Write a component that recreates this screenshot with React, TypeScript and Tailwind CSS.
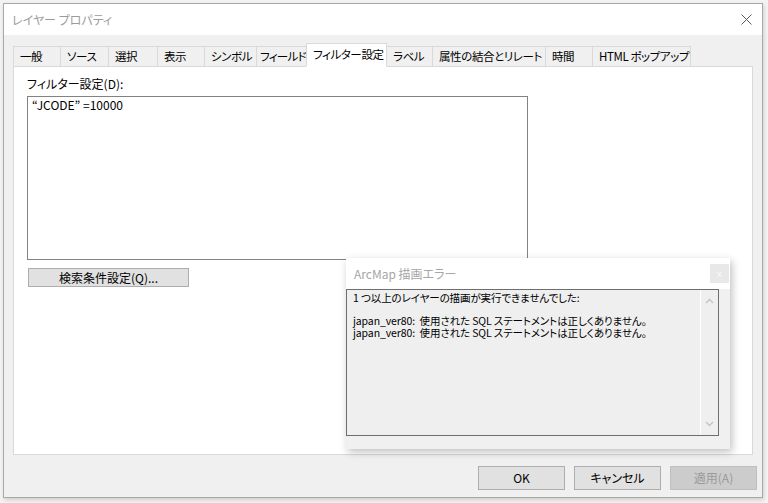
const tabs = [
  { label: '一般', w: 48 },
  { label: 'ソース', w: 49 },
  { label: '選択', w: 50 },
  { label: '表示', w: 48 },
  { label: 'シンボル', w: 53 },
  { label: 'フィールド', w: 51, tight: true },
  { label: 'フィルター設定', w: 81, active: true },
  { label: 'ラベル', w: 47 },
  { label: '属性の結合とリレート', w: 114 },
  { label: '時間', w: 48 },
  { label: 'HTML ポップアップ', w: 99 },
];

const font = "font-['Meiryo_UI','Noto_Sans_CJK_JP',sans-serif] [font-feature-settings:'palt']";

function Chevron({ up }: { up?: boolean }) {
  return (
    <svg width="9" height="6" viewBox="0 0 9 6" className="block">
      <path
        d={up ? 'M1 5 L4.5 1.5 L8 5' : 'M1 1 L4.5 4.5 L8 1'}
        fill="none"
        stroke="#c4c4c4"
        strokeWidth="1.4"
      />
    </svg>
  );
}

function ErrorDialog() {
  return (
    <div className="absolute left-[346px] top-[258px] w-[384px] h-[191px] bg-[#f0f0f0] shadow-[2px_3px_8px_rgba(0,0,0,0.25)] flex flex-col">
      <div className="h-[31px] bg-white flex items-center justify-between pl-[8px] pr-[1px]">
        <span className="text-[12px] text-[#a6a6a6]">ArcMap 描画エラー</span>
        <div className="w-[19px] h-[19px] bg-[#e8e8e8] flex items-center justify-center text-[9px] leading-none text-[#fafafa]">
          x
        </div>
      </div>
      <div className="w-[373px] h-[147px] border border-[#6e6e6e] bg-[#efefef] flex">
        <p className="flex-1 pl-[6px] pt-[2px] text-[10.5px] leading-[11.5px] text-black tracking-[-0.1px] whitespace-nowrap">
          1 つ以上のレイヤーの描画が実行できませんでした:
          <br />
          <br />
          japan_ver80:&nbsp;&nbsp;使用された SQL ステートメントは正しくありません。
          <br />
          japan_ver80:&nbsp;&nbsp;使用された SQL ステートメントは正しくありません。
        </p>
        <div className="w-[18px] border-l border-white flex flex-col justify-between items-center py-[8px]">
          <Chevron up />
          <Chevron />
        </div>
      </div>
    </div>
  );
}

export default function App() {
  return (
    <div className={`relative w-[768px] h-[503px] bg-[#f3f3f3] overflow-hidden ${font}`}>
      <div className="ml-[3px] mt-[3px] w-[760px] h-[495px] border border-[#a8a8a8] bg-[#f0f0f0] shadow-[1px_2px_4px_rgba(0,0,0,0.15)] flex flex-col">
        <div className="h-[31px] bg-white flex items-center justify-between pl-[8px] pr-[10px] shrink-0">
          <span className="text-[12px] text-[#9b9b9b]">レイヤー プロパティ</span>
          <svg width="11" height="11" viewBox="0 0 11 11">
            <path d="M0.5 0.5 L10.5 10.5 M10.5 0.5 L0.5 10.5" stroke="#5a5a5a" strokeWidth="1" />
          </svg>
        </div>

        <div className="pl-[9px] pt-[8px] flex items-end h-[31px] shrink-0">
          {tabs.map((t) =>
            t.active ? (
              <div
                key={t.label}
                className="h-[24px] -mb-px -ml-px z-10 bg-white border border-[#d9d9d9] border-b-white flex items-center pl-[6px] text-[11.5px] tracking-[-0.4px] whitespace-nowrap text-black"
                style={{ width: t.w }}
              >
                {t.label}
              </div>
            ) : (
              <div
                key={t.label}
                className={`h-[20px] bg-[#f0f0f0] border border-[#d9d9d9] border-b-0 -ml-px first:ml-0 flex items-center text-[11.5px] whitespace-nowrap text-black ${
                  t.tight ? 'pl-[3px] tracking-[-0.7px]' : 'pl-[6px] tracking-[-0.4px]'
                }`}
                style={{ width: t.w }}
              >
                {t.label}
              </div>
            )
          )}
        </div>

        <div className="ml-[9px] w-[740px] h-[389px] bg-white border border-[#d9d9d9] pl-[13px] pt-[9px] shrink-0">
          <div className="text-[12px] leading-[16px] text-black">フィルター設定(D):</div>
          <div className="mt-[4px] w-[501px] h-[164px] border border-[#828282] pl-[4px] text-[12px] leading-[15px] text-black">
            “JCODE” =10000
          </div>
          <div className="mt-[8px] ml-px w-[161px] h-[19px] bg-[#e1e1e1] border border-[#adadad] flex items-center justify-center text-[12px] text-black">
            検索条件設定(Q)...
          </div>
        </div>

        <div className="flex justify-end gap-[9px] pr-[5px] pt-[11px]">
          <div className="w-[87px] h-[24px] bg-[#e1e1e1] border border-[#adadad] flex items-center justify-center text-[12px] text-black">
            OK
          </div>
          <div className="w-[87px] h-[24px] bg-[#e1e1e1] border border-[#adadad] flex items-center justify-center text-[12px] text-black">
            キャンセル
          </div>
          <div className="w-[87px] h-[24px] bg-[#cccccc] border border-[#bfbfbf] flex items-center justify-center text-[12px] text-[#9a9a9a]">
            適用(A)
          </div>
        </div>
      </div>

      <ErrorDialog />
    </div>
  );
}
